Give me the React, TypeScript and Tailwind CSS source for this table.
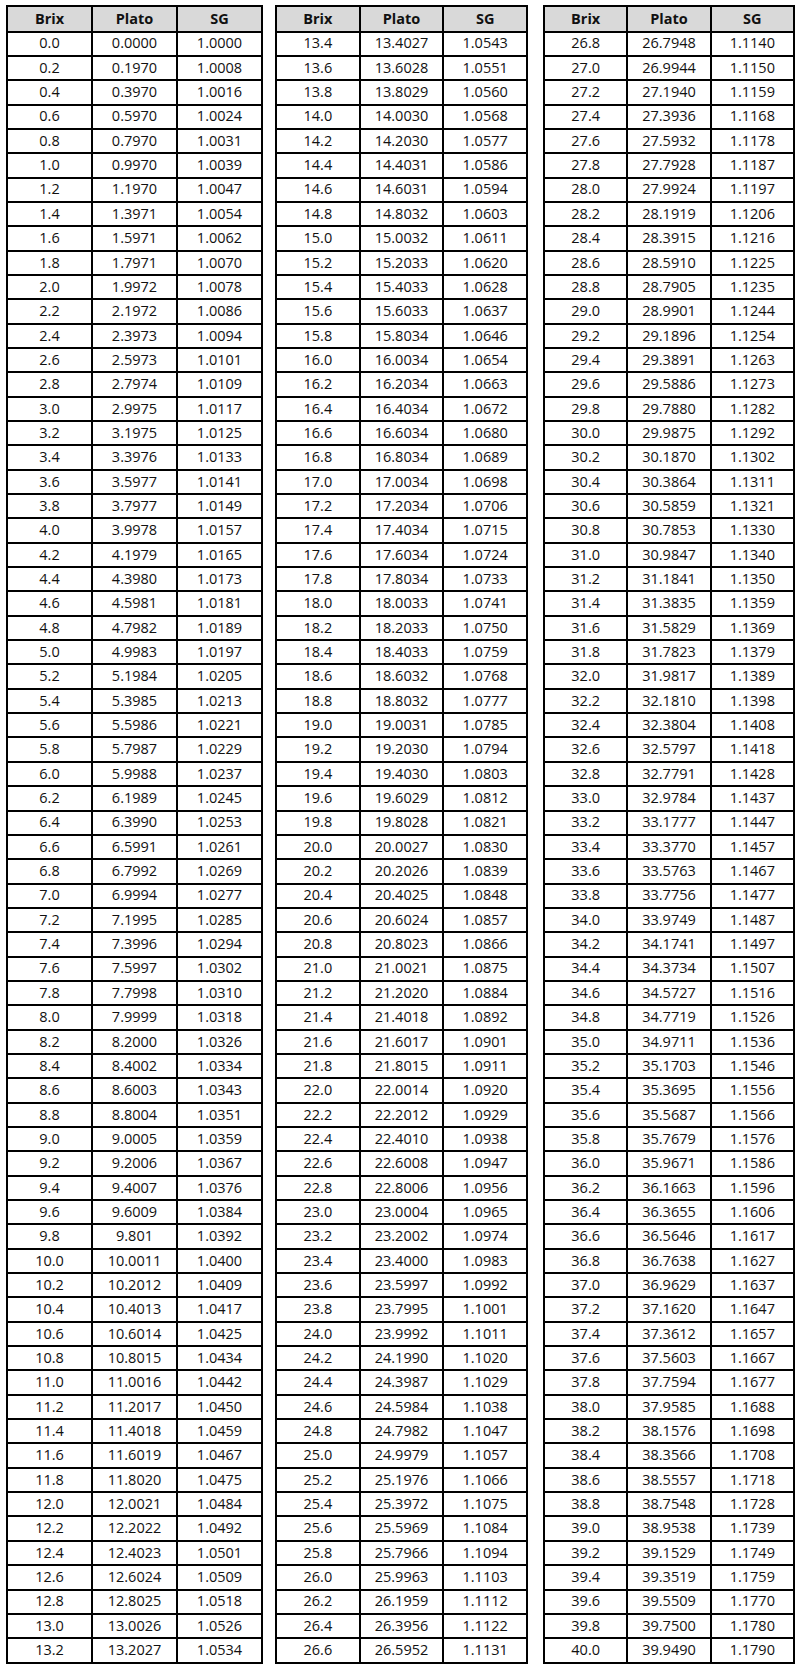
const t1 = `0.0 0.0000 1.0000
0.2 0.1970 1.0008
0.4 0.3970 1.0016
0.6 0.5970 1.0024
0.8 0.7970 1.0031
1.0 0.9970 1.0039
1.2 1.1970 1.0047
1.4 1.3971 1.0054
1.6 1.5971 1.0062
1.8 1.7971 1.0070
2.0 1.9972 1.0078
2.2 2.1972 1.0086
2.4 2.3973 1.0094
2.6 2.5973 1.0101
2.8 2.7974 1.0109
3.0 2.9975 1.0117
3.2 3.1975 1.0125
3.4 3.3976 1.0133
3.6 3.5977 1.0141
3.8 3.7977 1.0149
4.0 3.9978 1.0157
4.2 4.1979 1.0165
4.4 4.3980 1.0173
4.6 4.5981 1.0181
4.8 4.7982 1.0189
5.0 4.9983 1.0197
5.2 5.1984 1.0205
5.4 5.3985 1.0213
5.6 5.5986 1.0221
5.8 5.7987 1.0229
6.0 5.9988 1.0237
6.2 6.1989 1.0245
6.4 6.3990 1.0253
6.6 6.5991 1.0261
6.8 6.7992 1.0269
7.0 6.9994 1.0277
7.2 7.1995 1.0285
7.4 7.3996 1.0294
7.6 7.5997 1.0302
7.8 7.7998 1.0310
8.0 7.9999 1.0318
8.2 8.2000 1.0326
8.4 8.4002 1.0334
8.6 8.6003 1.0343
8.8 8.8004 1.0351
9.0 9.0005 1.0359
9.2 9.2006 1.0367
9.4 9.4007 1.0376
9.6 9.6009 1.0384
9.8 9.801 1.0392
10.0 10.0011 1.0400
10.2 10.2012 1.0409
10.4 10.4013 1.0417
10.6 10.6014 1.0425
10.8 10.8015 1.0434
11.0 11.0016 1.0442
11.2 11.2017 1.0450
11.4 11.4018 1.0459
11.6 11.6019 1.0467
11.8 11.8020 1.0475
12.0 12.0021 1.0484
12.2 12.2022 1.0492
12.4 12.4023 1.0501
12.6 12.6024 1.0509
12.8 12.8025 1.0518
13.0 13.0026 1.0526
13.2 13.2027 1.0534`;

const t2 = `13.4 13.4027 1.0543
13.6 13.6028 1.0551
13.8 13.8029 1.0560
14.0 14.0030 1.0568
14.2 14.2030 1.0577
14.4 14.4031 1.0586
14.6 14.6031 1.0594
14.8 14.8032 1.0603
15.0 15.0032 1.0611
15.2 15.2033 1.0620
15.4 15.4033 1.0628
15.6 15.6033 1.0637
15.8 15.8034 1.0646
16.0 16.0034 1.0654
16.2 16.2034 1.0663
16.4 16.4034 1.0672
16.6 16.6034 1.0680
16.8 16.8034 1.0689
17.0 17.0034 1.0698
17.2 17.2034 1.0706
17.4 17.4034 1.0715
17.6 17.6034 1.0724
17.8 17.8034 1.0733
18.0 18.0033 1.0741
18.2 18.2033 1.0750
18.4 18.4033 1.0759
18.6 18.6032 1.0768
18.8 18.8032 1.0777
19.0 19.0031 1.0785
19.2 19.2030 1.0794
19.4 19.4030 1.0803
19.6 19.6029 1.0812
19.8 19.8028 1.0821
20.0 20.0027 1.0830
20.2 20.2026 1.0839
20.4 20.4025 1.0848
20.6 20.6024 1.0857
20.8 20.8023 1.0866
21.0 21.0021 1.0875
21.2 21.2020 1.0884
21.4 21.4018 1.0892
21.6 21.6017 1.0901
21.8 21.8015 1.0911
22.0 22.0014 1.0920
22.2 22.2012 1.0929
22.4 22.4010 1.0938
22.6 22.6008 1.0947
22.8 22.8006 1.0956
23.0 23.0004 1.0965
23.2 23.2002 1.0974
23.4 23.4000 1.0983
23.6 23.5997 1.0992
23.8 23.7995 1.1001
24.0 23.9992 1.1011
24.2 24.1990 1.1020
24.4 24.3987 1.1029
24.6 24.5984 1.1038
24.8 24.7982 1.1047
25.0 24.9979 1.1057
25.2 25.1976 1.1066
25.4 25.3972 1.1075
25.6 25.5969 1.1084
25.8 25.7966 1.1094
26.0 25.9963 1.1103
26.2 26.1959 1.1112
26.4 26.3956 1.1122
26.6 26.5952 1.1131`;

const t3 = `26.8 26.7948 1.1140
27.0 26.9944 1.1150
27.2 27.1940 1.1159
27.4 27.3936 1.1168
27.6 27.5932 1.1178
27.8 27.7928 1.1187
28.0 27.9924 1.1197
28.2 28.1919 1.1206
28.4 28.3915 1.1216
28.6 28.5910 1.1225
28.8 28.7905 1.1235
29.0 28.9901 1.1244
29.2 29.1896 1.1254
29.4 29.3891 1.1263
29.6 29.5886 1.1273
29.8 29.7880 1.1282
30.0 29.9875 1.1292
30.2 30.1870 1.1302
30.4 30.3864 1.1311
30.6 30.5859 1.1321
30.8 30.7853 1.1330
31.0 30.9847 1.1340
31.2 31.1841 1.1350
31.4 31.3835 1.1359
31.6 31.5829 1.1369
31.8 31.7823 1.1379
32.0 31.9817 1.1389
32.2 32.1810 1.1398
32.4 32.3804 1.1408
32.6 32.5797 1.1418
32.8 32.7791 1.1428
33.0 32.9784 1.1437
33.2 33.1777 1.1447
33.4 33.3770 1.1457
33.6 33.5763 1.1467
33.8 33.7756 1.1477
34.0 33.9749 1.1487
34.2 34.1741 1.1497
34.4 34.3734 1.1507
34.6 34.5727 1.1516
34.8 34.7719 1.1526
35.0 34.9711 1.1536
35.2 35.1703 1.1546
35.4 35.3695 1.1556
35.6 35.5687 1.1566
35.8 35.7679 1.1576
36.0 35.9671 1.1586
36.2 36.1663 1.1596
36.4 36.3655 1.1606
36.6 36.5646 1.1617
36.8 36.7638 1.1627
37.0 36.9629 1.1637
37.2 37.1620 1.1647
37.4 37.3612 1.1657
37.6 37.5603 1.1667
37.8 37.7594 1.1677
38.0 37.9585 1.1688
38.2 38.1576 1.1698
38.4 38.3566 1.1708
38.6 38.5557 1.1718
38.8 38.7548 1.1728
39.0 38.9538 1.1739
39.2 39.1529 1.1749
39.4 39.3519 1.1759
39.6 39.5509 1.1770
39.8 39.7500 1.1780
40.0 39.9490 1.1790`;

const parse = (s: string) => s.split("\n").map((l) => l.trim().split(" "));

function DataTable({ rows, width }: { rows: string[][]; width: string }) {
  return (
    <table
      className={`${width} table-fixed border-collapse border-2 border-black text-[14.5px] text-[#111]`}
      style={{ fontFamily: '"Open Sans", "Liberation Sans", Arial, sans-serif' }}
    >
      <thead>
        <tr className="h-[25.5px] bg-[#d9d9d9]">
          <th className="border-2 border-black p-0 text-center font-bold leading-none">Brix</th>
          <th className="border-2 border-black p-0 text-center font-bold leading-none">Plato</th>
          <th className="border-2 border-black p-0 text-center font-bold leading-none">SG</th>
        </tr>
      </thead>
      <tbody>
        {rows.map((r, i) => (
          <tr key={i} className="h-[24.35px] bg-white">
            {r.map((c, j) => (
              <td key={j} className="border-2 border-black p-0 text-center leading-none">
                {c}
              </td>
            ))}
          </tr>
        ))}
      </tbody>
    </table>
  );
}

export default function App() {
  return (
    <div className="flex h-[1664px] w-[800px] items-start bg-white pl-[6px] pt-[5px]">
      <DataTable rows={parse(t1)} width="w-[257px]" />
      <div className="w-[12px] shrink-0" />
      <DataTable rows={parse(t2)} width="w-[253px]" />
      <div className="w-[15px] shrink-0" />
      <DataTable rows={parse(t3)} width="w-[252px]" />
    </div>
  );
}
